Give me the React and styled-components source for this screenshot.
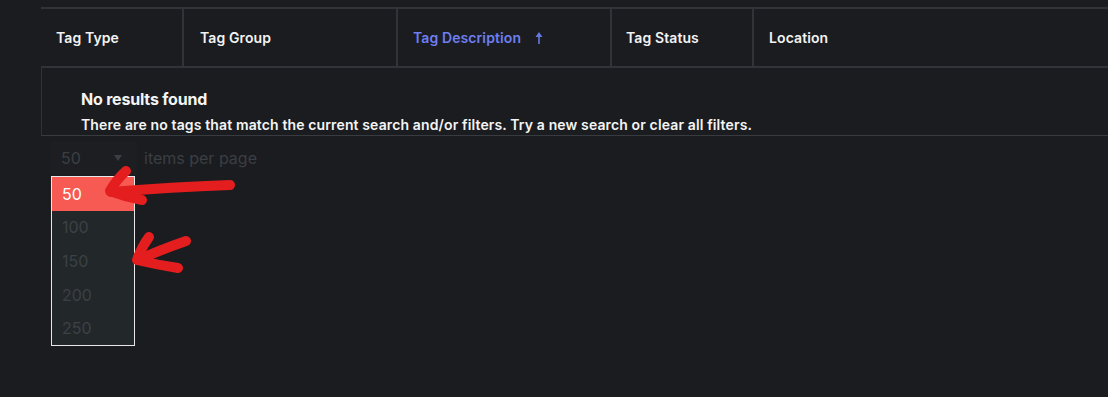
import React from 'react'
import styled, { createGlobalStyle } from 'styled-components'

const GlobalStyle = createGlobalStyle`
  html, body {
    margin: 0;
    padding: 0;
    background: #1a1c20;
  }
  body {
    font-family: Inter, "Noto Sans", sans-serif;
  }
`

const Page = styled.div`
  position: relative;
  width: 1108px;
  height: 397px;
  overflow: hidden;
  background: #1a1c20;
  padding-top: 7px;
  box-sizing: border-box;
`

const Table = styled.div`
  margin-left: 41px;
`

const HeaderRow = styled.div`
  display: grid;
  grid-template-columns: 143px 214px 214px 142px 1fr;
  border-top: 2px solid #303338;
  border-bottom: 2px solid #303338;
  height: 61px;
  box-sizing: border-box;
`

const HeaderCell = styled.div`
  display: flex;
  align-items: center;
  gap: 14px;
  padding: 1px 0 0 ${(p) => p.$pad || 15}px;
  border-right: ${(p) => (p.$last ? 'none' : '2px solid #303338')};
  color: ${(p) => (p.$active ? '#6e7ef0' : '#f2f2f2')};
  font-size: 14px;
  font-weight: 600;
  line-height: 20px;
  letter-spacing: 0.1px;
`

const Empty = styled.div`
  border-left: 1px solid #2f3236;
  border-bottom: 1px solid #383b40;
  padding: 21px 0 0 39px;
  height: 68px;
  box-sizing: border-box;
  color: #f4f4f4;
`

const EmptyTitle = styled.div`
  font-size: 16px;
  font-weight: 700;
  line-height: 20px;
  letter-spacing: -0.2px;
`

const EmptyText = styled.div`
  margin-top: 6px;
  font-size: 14px;
  font-weight: 600;
  line-height: 20px;
  letter-spacing: 0.13px;
`

const Pager = styled.div`
  display: flex;
  align-items: center;
  margin: 5px 0 0 50px;
  gap: 7px;
`

const Select = styled.div`
  position: relative;
  display: flex;
  align-items: center;
  justify-content: space-between;
  width: 87px;
  height: 34px;
  padding: 0 15px 0 11px;
  box-sizing: border-box;
  background: #1c1e22;
  color: #3b3e43;
  font-size: 16px;
`

const Caret = styled.span`
  width: 0;
  height: 0;
  border-left: 4.5px solid transparent;
  border-right: 4.5px solid transparent;
  border-top: 6px solid #3b3e43;
`

const Label = styled.span`
  color: #3b3e43;
  font-size: 16px;
`

const Menu = styled.div`
  position: absolute;
  top: 35px;
  left: 1px;
  width: 84px;
  border: 1px solid #e8e8e8;
  box-sizing: border-box;
  background: #22272a;
  z-index: 2;
`

const Option = styled.div`
  height: 33.6px;
  display: flex;
  align-items: center;
  padding-left: 10px;
  font-size: 16px;
  color: ${(p) => (p.$selected ? '#ffffff' : '#3c4145')};
  background: ${(p) => (p.$selected ? '#f65a52' : 'transparent')};
`

const Scribble = styled.svg`
  position: absolute;
  left: 0;
  top: 0;
  pointer-events: none;
  z-index: 3;
`

const SortUp = () => (
  <svg width="8" height="12" viewBox="0 0 8 12">
    <path d="M4 0 L7.5 5 L4.8 5 L4.8 12 L3.2 12 L3.2 5 L0.5 5 Z" fill="#6677dd" />
  </svg>
)

const columns = ['Tag Type', 'Tag Group', 'Tag Description', 'Tag Status', 'Location']
const sizes = [50, 100, 150, 200, 250]

export default function App() {
  return (
    <Page>
      <GlobalStyle />
      <Table>
        <HeaderRow>
          {columns.map((c, i) => (
            <HeaderCell
              key={c}
              $active={c === 'Tag Description'}
              $last={i === columns.length - 1}
              $pad={i === 1 ? 16 : i === 3 ? 14 : 15}
            >
              {c}
              {c === 'Tag Description' && <SortUp />}
            </HeaderCell>
          ))}
        </HeaderRow>
        <Empty>
          <EmptyTitle>No results found</EmptyTitle>
          <EmptyText>
            There are no tags that match the current search and/or filters. Try a new search or clear all filters.
          </EmptyText>
        </Empty>
      </Table>
      <Pager>
        <Select>
          50
          <Caret />
          <Menu>
            {sizes.map((s) => (
              <Option key={s} $selected={s === 50}>
                {s}
              </Option>
            ))}
          </Menu>
        </Select>
        <Label>items per page</Label>
      </Pager>
      <Scribble width="1108" height="397" viewBox="0 0 1108 397">
        <g fill="none" stroke="#e41e1e" strokeWidth="10" strokeLinecap="round" strokeLinejoin="round">
          <path d="M230 185 Q172 187 111 192" />
          <path d="M126 171 Q116 180 110 191 Q126 197 142 200" />
          <path d="M186 241 Q160 250 138 260" />
          <path d="M149 237 Q141 248 137 260 Q158 265 178 268" />
        </g>
      </Scribble>
    </Page>
  )
}
